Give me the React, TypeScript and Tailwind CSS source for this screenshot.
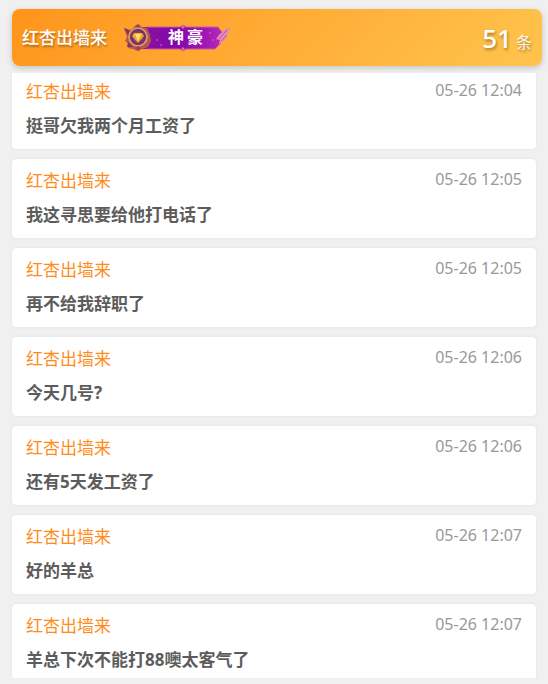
type Message = {
  id: number;
  text: string;
  time: string;
};

const USER_NAME = "红杏出墙来";
const TOTAL = 51;

const messages: Message[] = [
  { id: 1, text: "挺哥欠我两个月工资了", time: "05-26 12:04" },
  { id: 2, text: "我这寻思要给他打电话了", time: "05-26 12:05" },
  { id: 3, text: "再不给我辞职了", time: "05-26 12:05" },
  { id: 4, text: "今天几号?", time: "05-26 12:06" },
  { id: 5, text: "还有5天发工资了", time: "05-26 12:06" },
  { id: 6, text: "好的羊总", time: "05-26 12:07" },
  { id: 7, text: "羊总下次不能打88噢太客气了", time: "05-26 12:07" },
];

function RankBadge() {
  return (
    <span className="relative inline-flex h-7 w-[108px] items-center justify-center pl-5">
      <svg
        viewBox="0 0 108 28"
        className="absolute inset-0 h-full w-full"
        aria-hidden="true"
      >
        <defs>
          <linearGradient id="ribbon" x1="0" x2="1" y1="0" y2="0">
            <stop offset="0" stopColor="#8a159f" />
            <stop offset="0.45" stopColor="#8208a8" />
            <stop offset="0.8" stopColor="#a018b4" />
            <stop offset="1" stopColor="#b52bb8" />
          </linearGradient>
          <radialGradient id="medal">
            <stop offset="0" stopColor="#b06b40" />
            <stop offset="0.55" stopColor="#7d3670" />
            <stop offset="1" stopColor="#67246d" />
          </radialGradient>
        </defs>
        {/* ribbon */}
        <path
          d="M15 3H57l3-2 3 2h32l4 5-1 10-6 7H63l-3 2-3-2H15z"
          fill="url(#ribbon)"
        />
        <path
          d="M24 3H57l3-2 3 2h32M24 25h33l3 2 3-2h29l6-6"
          fill="none"
          stroke="#d557a2"
          strokeWidth="1"
        />
        <path d="M58 3l2-2 2 2-2 2zM58 25l2-2 2 2-2 2z" fill="#df6c9b" />
        <g fill="#d85dd5" opacity="0.7">
          <circle cx="34" cy="16" r="1" />
          <circle cx="38" cy="21" r="1" />
          <circle cx="87" cy="9" r="1" />
          <circle cx="90" cy="16" r="1" />
        </g>
        {/* wing */}
        <path
          d="M96 11l5-5 6-3-2 6-2 2 2 1-5 6-4 2 1-4-4-1z"
          fill="#e58cb4"
        />
        <path
          d="M96 15l8-9M98 17l6-6"
          fill="none"
          stroke="#b951a8"
          strokeWidth="1"
        />
        {/* medal */}
        <path
          d="M1 4l7 2 4-4 3-1 4 2 5 1 3 7 1 6-3 6-6 2-4 2-5-2-5-1 1-4-4-3 2-4z"
          fill="#b05a4f"
        />
        <path d="M1 4l6 3-2 4zM4 23l1-5 5 5z" fill="#8c315c" />
        <circle cx="15" cy="13" r="10" fill="url(#medal)" />
        <circle
          cx="15"
          cy="13"
          r="9"
          fill="none"
          stroke="#dc9a5c"
          strokeWidth="2"
        />
        <circle
          cx="15"
          cy="13"
          r="7"
          fill="none"
          stroke="#713067"
          strokeWidth="1"
        />
        <path d="M11 9h8l2 3-6 7-6-7z" fill="#f0a82c" />
        <path d="M12 10h6l-3 7z" fill="#ffe36d" />
        <path d="M12 2l3-2 3 2-3 2zM12 24l3-2 3 2-3 3z" fill="#a33c68" />
      </svg>
      <span className="relative pb-0.5 text-base leading-5 font-bold tracking-[3px]">
        神豪
      </span>
    </span>
  );
}

function MessageCard({ message }: { message: Message }) {
  return (
    <li className="shrink-0 rounded-[5px] border border-[#ebebeb] bg-white px-3.5 pt-2.5 pb-[11px] shadow-[0_0_2px_rgba(0,0,0,0.05)]">
      <div className="flex items-start justify-between">
        <span className="text-[17px] leading-6 text-[#ff8c1a]">
          {USER_NAME}
        </span>
        <time className="text-base leading-5 text-[#999999]">
          {message.time}
        </time>
      </div>
      <p className="mt-2.5 text-[17px] leading-6 font-bold text-[#5c5c5c]">
        {message.text}
      </p>
    </li>
  );
}

export default function App() {
  return (
    <main className="flex h-screen flex-col bg-[#f0f0f0] pt-[9px] pb-1.5 font-['Noto_Sans','Noto_Sans_CJK_SC',sans-serif]">
      <header className="mr-1.5 ml-3 flex h-[57px] shrink-0 items-center justify-between rounded-lg bg-linear-135 from-[#ff9418] to-[#ffc44c] px-2.5 text-white shadow-[0_2px_6px_rgba(0,0,0,0.18)]">
        <div className="flex items-center gap-4">
          <h1 className="text-[17px] leading-6 font-medium text-shadow-[1px_2px_2px_rgba(0,0,0,0.3)]">
            {USER_NAME}
          </h1>
          <RankBadge />
        </div>
        <p className="flex items-baseline gap-1 text-shadow-[1px_2px_3px_rgba(0,0,0,0.35)]">
          <span className="text-[26px] leading-8 font-medium">{TOTAL}</span>
          <span className="text-base leading-6 text-white/90">条</span>
        </p>
      </header>

      {/* the feed is scrolled slightly, so the first card tucks under the top edge */}
      <div className="mt-[7px] mr-[11px] ml-[11px] min-h-0 flex-1 overflow-hidden">
        <ul className="-mt-1 flex flex-col gap-2">
          {messages.map((message) => (
            <MessageCard key={message.id} message={message} />
          ))}
        </ul>
      </div>
    </main>
  );
}
